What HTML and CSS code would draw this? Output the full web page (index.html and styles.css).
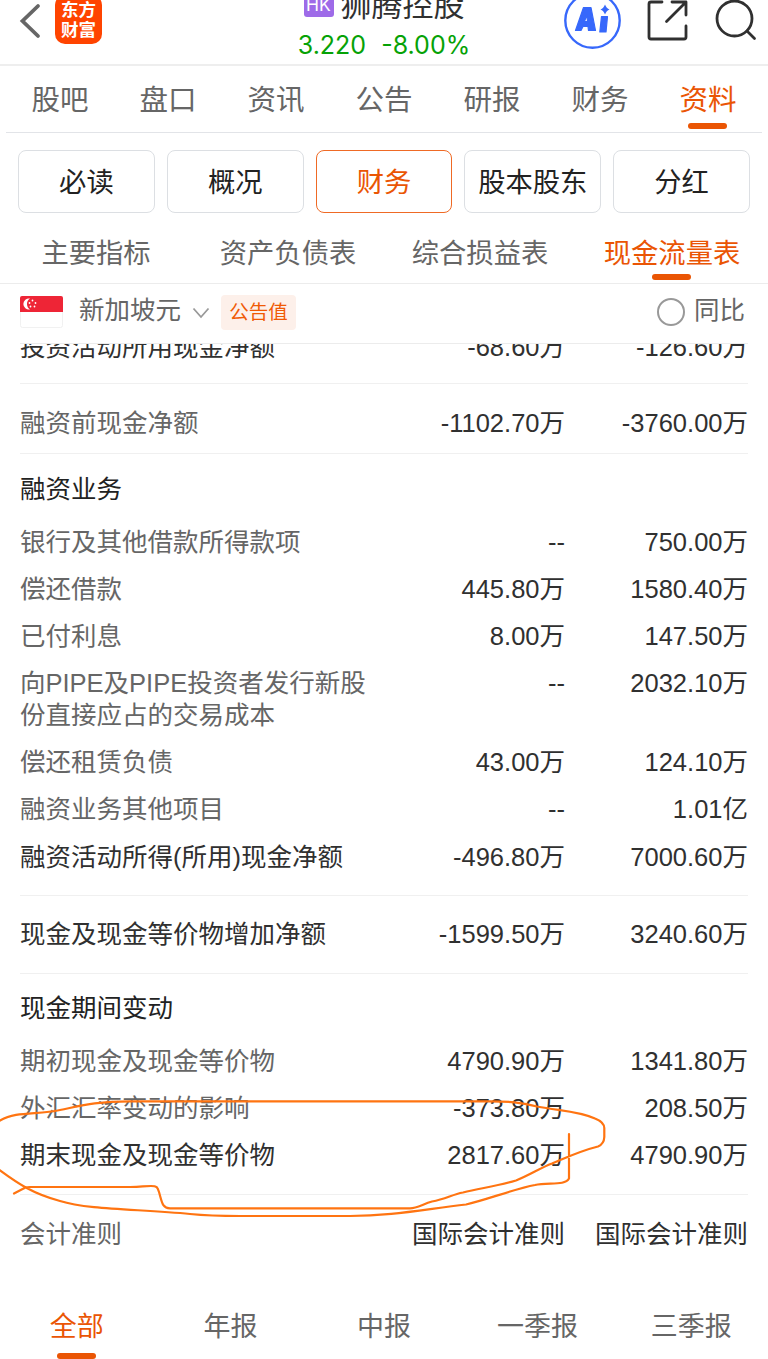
FILE: index.html
```html
<!DOCTYPE html>
<html lang="zh-CN">
<head>
<meta charset="utf-8">
<title>狮腾控股</title>
<link rel="stylesheet" href="styles.css">
</head>
<body>
<div class="app">
  <header class="header">
    <svg class="back" width="24" height="40" viewBox="0 0 24 40"><path d="M19 5L3.500 20L19 35" fill="none" stroke="#666" stroke-width="3.800" stroke-linecap="round"/></svg>
    <div class="logo"><span>东方</span><span>财富</span></div>
    <div class="stock">
      <div class="stock-name"><span class="market">HK</span><span>狮腾控股</span></div>
      <div class="quote"><span>3.220</span><span>-8.00%</span></div>
    </div>
    <svg class="actions" width="204" height="64" viewBox="564 0 204 64">
      <circle cx="592.500" cy="20.500" r="27.200" fill="#fff" stroke="#3768fb" stroke-width="2.400"/>
      <path fill="#3768fb" fill-rule="evenodd" stroke="#3768fb" stroke-width="1.200" stroke-linejoin="round" d="M583.500 7.500H591L595.500 30.500H588.500L588 26.500H583L581 30.500H575.500ZM586.800 15L584.500 21.500H587.500Z"/>
      <path fill="#3768fb" stroke="#3768fb" stroke-width="1.200" stroke-linejoin="round" d="M601.500 16.500H607.500L606 32H599.800Z"/>
      <path fill="#3768fb" d="M605 4.500Q606.500 8.500 609.500 9.500Q606.500 10.500 605 14.500Q603.500 10.500 600.500 9.500Q603.500 8.500 605 4.500Z"/>
      <g fill="none" stroke="#303030" stroke-width="2.800" stroke-linecap="round" stroke-linejoin="round">
        <path d="M662 2H651Q649 2 649 4V37Q649 39 651 39H684Q686 39 686 37V26M672 2H686V15M686 2L666.500 21.500"/>
        <circle cx="734.500" cy="18.500" r="17.500"/>
        <path d="M747 31L754.500 38.500"/>
      </g>
    </svg>
  </header>

  <nav class="main-tabs">
    <span>股吧</span><span>盘口</span><span>资讯</span><span>公告</span><span>研报</span><span>财务</span><span class="active">资料</span>
  </nav>

  <div class="pills">
    <span>必读</span><span>概况</span><span class="selected">财务</span><span>股本股东</span><span>分红</span>
  </div>

  <nav class="sub-tabs">
    <span>主要指标</span><span>资产负债表</span><span>综合损益表</span><span class="active">现金流量表</span>
  </nav>

  <div class="filters">
    <svg class="flag" width="43" height="32" viewBox="0 0 43 32">
      <rect x=".5" y=".5" width="42" height="31" rx="2" fill="#fff" stroke="#f1f1f1"/>
      <path d="M0 16V2Q0 0 2 0H41Q43 0 43 2V16Z" fill="#ee2536"/>
      <path d="M10 2.500A5.600 5.600 0 1 0 10 13.500A6.500 6.500 0 0 1 10 2.500Z" fill="#fff"/>
      <g fill="#fff"><circle cx="12.500" cy="4.500" r=".9"/><circle cx="9.500" cy="7" r=".9"/><circle cx="15.500" cy="7" r=".9"/><circle cx="10.500" cy="10.500" r=".9"/><circle cx="14.500" cy="10.500" r=".9"/></g>
    </svg>
    <span class="currency">新加坡元</span>
    <svg class="chevron" width="18" height="12" viewBox="0 0 18 12"><path d="M1.500 1.500L9 10L16.500 1.500" fill="none" stroke="#999" stroke-width="1.800"/></svg>
    <span class="tag">公告值</span>
    <span class="radio"></span>
    <span class="compare">同比</span>
  </div>

  <main class="report">
    <section class="group clipped">
      <div class="row strong"><span>投资活动所用现金净额</span><b>-68.60万</b><b>-126.60万</b></div>
    </section>
    <section class="group before">
      <div class="row"><span>融资前现金净额</span><b>-1102.70万</b><b>-3760.00万</b></div>
    </section>
    <section class="group">
      <h2 class="first-heading">融资业务</h2>
      <div class="row"><span>银行及其他借款所得款项</span><b>--</b><b>750.00万</b></div>
      <div class="row"><span>偿还借款</span><b>445.80万</b><b>1580.40万</b></div>
      <div class="row"><span>已付利息</span><b>8.00万</b><b>147.50万</b></div>
      <div class="row"><span>向PIPE及PIPE投资者发行新股份直接应占的交易成本</span><b>--</b><b>2032.10万</b></div>
      <div class="row"><span>偿还租赁负债</span><b>43.00万</b><b>124.10万</b></div>
      <div class="row"><span>融资业务其他项目</span><b>--</b><b>1.01亿</b></div>
      <div class="row strong"><span>融资活动所得(所用)现金净额</span><b>-496.80万</b><b>7000.60万</b></div>
    </section>
    <section class="group total">
      <div class="row strong"><span>现金及现金等价物增加净额</span><b>-1599.50万</b><b>3240.60万</b></div>
    </section>
    <section class="group">
      <h2>现金期间变动</h2>
      <div class="row"><span>期初现金及现金等价物</span><b>4790.90万</b><b>1341.80万</b></div>
      <div class="row"><span>外汇汇率变动的影响</span><b>-373.80万</b><b>208.50万</b></div>
      <div class="row strong"><span>期末现金及现金等价物</span><b>2817.60万</b><b>4790.90万</b></div>
    </section>
    <section class="group standard">
      <div class="row"><span>会计准则</span><b>国际会计准则</b><b>国际会计准则</b></div>
    </section>
  </main>

  <nav class="periods">
    <span class="active">全部</span><span>年报</span><span>中报</span><span>一季报</span><span>三季报</span>
  </nav>

  <svg class="markup" width="768" height="130" viewBox="0 1095 768 130">
    <path d="M14 1193.500L25 1187.800Q27 1187 30 1187H130C142 1187 143 1186 151 1186C157 1186 157.500 1187 159 1192C162 1202 162 1208 170 1208.300H410C417 1208.300 423 1204 432 1201.500C446 1199 452 1194.500 463 1192.500C480 1188 494 1187 516 1180.500C530 1175 540 1168 552 1163.500C570 1156 580 1151 598 1146.500Q604 1144 604.300 1137V1128Q604 1122 595 1118.500C578 1111 560 1111 537 1106.500C520 1102.500 510 1101.300 490 1101.300H130C95 1101.300 80 1106 60 1110C38 1115 16 1111 0 1120.500C-25 1135 -20 1152 0 1170.500C17 1183 33 1194 60 1201C88 1210 140 1209 190 1214Q210 1216 240 1216H350C390 1216 420 1210 466 1204.500C486 1200 514 1189 535 1185C548 1182 565 1186 569 1178.500V1134"/>
  </svg>
</div>
</body>
</html>
```

FILE: styles.css
```css
* { box-sizing: border-box; }
body {
  margin: 0;
  background: #fff;
  color: #666;
  font-family: "Liberation Sans", "Noto Sans CJK SC", sans-serif;
}
.app {
  position: relative;
  display: flex;
  flex-direction: column;
  width: 768px;
  height: 1359px;
  overflow: hidden;
}
svg { display: block; flex: none; }

.header {
  display: flex;
  flex: none;
  height: 66px;
  overflow: hidden;
  border-bottom: 2px solid #eee;
}
.back { margin: 1px 0 0 19px; }
.logo {
  display: flex;
  flex-direction: column;
  width: 47px;
  height: 49px;
  margin: -5px 0 0 12px;
  padding-top: 5px;
  border-radius: 10px;
  background: #ff4400;
  color: #fff;
  font-size: 17.5px;
  font-weight: 700;
  line-height: 20px;
  text-align: center;
}
.stock { width: 264px; margin-left: 150px; }
.stock-name {
  display: flex;
  align-items: center;
  justify-content: center;
  gap: 7px;
  height: 40px;
  margin-top: -14px;
  color: #303030;
  font-size: 31px;
  line-height: 40px;
  white-space: nowrap;
}
.market {
  width: 30px;
  height: 28px;
  margin-top: -6px;
  border-radius: 3px;
  background: #9e6be8;
  color: #fff;
  font-family: Inter, sans-serif;
  font-size: 17.5px;
  line-height: 31px;
  text-align: center;
}
.quote {
  display: flex;
  justify-content: center;
  gap: 15px;
  margin-top: 4px;
  color: #06a206;
  font-family: Inter, sans-serif;
  font-size: 25px;
  line-height: 31px;
}
.actions { margin-left: 48px; }

.main-tabs, .sub-tabs, .periods { display: flex; flex: none; text-align: center; }
.main-tabs > span, .sub-tabs > span, .periods > span { position: relative; flex: 1; }
.active { color: #ea5504; }
.active::after {
  position: absolute;
  left: 50%;
  width: 39px;
  height: 6px;
  margin-left: -20px;
  border-radius: 3px;
  background: #ea5504;
  content: "";
}
.main-tabs {
  height: 67px;
  margin: 0 6px;
  border-bottom: 1px solid #e2e4e8;
  font-size: 28.5px;
  line-height: 69px;
}
.main-tabs .active::after { top: 57px; }

.pills { display: flex; flex: none; gap: 12px; margin: 17px 18px 0; }
.pills span {
  flex: 1;
  height: 63px;
  border: 1px solid #dcdfe3;
  border-radius: 8px;
  color: #222;
  font-size: 27.3px;
  line-height: 63px;
  text-align: center;
  white-space: nowrap;
}
.pills .selected { border-color: #ef6a25; color: #ea5504; }

.sub-tabs {
  height: 71px;
  border-bottom: 1px solid #ececec;
  font-size: 27.3px;
  line-height: 81px;
}
.sub-tabs .active::after { top: 61px; }

.filters {
  display: flex;
  flex: none;
  align-items: center;
  height: 60px;
  margin: 0 20px;
  padding-bottom: 3px;
  border-bottom: 1px solid #ececec;
  font-size: 25.5px;
  line-height: 36px;
}
.currency { margin: -5px 0 0 16px; }
.chevron { margin: 2px 11px 0; }
.tag {
  width: 75px;
  height: 35px;
  border-radius: 4px;
  background: #fdf0ea;
  color: #f05a05;
  font-size: 19.5px;
  line-height: 34px;
  text-align: center;
}
.radio {
  width: 28px;
  height: 28px;
  margin: 0 9px 0 auto;
  border: 2px solid #999;
  border-radius: 50%;
}
.compare { margin: -5px 3px 0 0; }

.report { flex: none; height: 934px; overflow: hidden; font-size: 25.5px; }
.group { margin: 0 20px; padding-bottom: 14.5px; border-bottom: 1px solid #f0f0f0; }
.row {
  display: grid;
  grid-template-columns: 360px 185px 183px;
  padding: 7.8px 0;
  line-height: 31.6px;
}
.row b { color: #303030; font-weight: 400; text-align: right; white-space: nowrap; }
.row.strong { color: #303030; }
h2 {
  margin: 0;
  padding: 18px 0 13.5px;
  color: #222;
  font-size: 25.5px;
  font-weight: 400;
  line-height: 32px;
}
.first-heading { padding: 19px 0 14px; }
.clipped { display: flow-root; height: 40px; padding: 0; }
.clipped .row { margin-top: -20px; }
.before { height: 70px; padding-top: 16px; }
.total { height: 78px; padding-top: 15px; }
.standard { padding-top: 16.5px; border: 0; }

.periods { height: 81px; font-size: 27px; line-height: 99px; }
.periods .active::after { top: 75px; }

.markup { position: absolute; top: 1095px; left: 0; pointer-events: none; }
.markup path { fill: none; stroke: #ff7411; stroke-width: 2.2; stroke-linecap: round; stroke-linejoin: round; }
```
